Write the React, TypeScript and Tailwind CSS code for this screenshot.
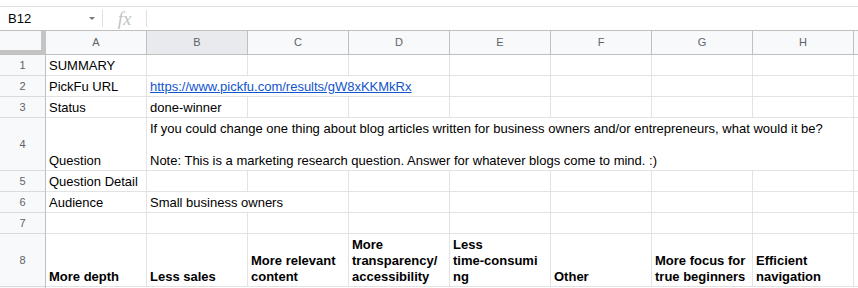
import React from "react";

const COLS = ["A", "B", "C", "D", "E", "F", "G", "H"];

const spanW: Record<number, string> = {
  1: "w-[101px]",
  2: "w-[202px]",
  3: "w-[303px]",
  7: "w-[707px]",
};

type Cell = { span?: number; lines?: string[]; link?: boolean; bold?: boolean };

type Row = { n: number; h: string; cells: Cell[] };

const rows: Row[] = [
  { n: 1, h: "h-[21px]", cells: [{ lines: ["SUMMARY"] }, {}, {}, {}, {}, {}, {}, {}] },
  {
    n: 2,
    h: "h-[21px]",
    cells: [
      { lines: ["PickFu URL"] },
      { span: 3, link: true, lines: ["https://www.pickfu.com/results/gW8xKKMkRx"] },
      {},
      {},
      {},
      {},
    ],
  },
  { n: 3, h: "h-[21px]", cells: [{ lines: ["Status"] }, { lines: ["done-winner"] }, {}, {}, {}, {}, {}, {}] },
  {
    n: 4,
    h: "h-[53px]",
    cells: [
      { lines: ["Question"] },
      {
        span: 7,
        lines: [
          "If you could change one thing about blog articles written for business owners and/or entrepreneurs, what would it be?",
          "\u00a0",
          "Note: This is a marketing research question. Answer for whatever blogs come to mind. :)",
        ],
      },
    ],
  },
  { n: 5, h: "h-[21px]", cells: [{ lines: ["Question Detail"] }, {}, {}, {}, {}, {}, {}, {}] },
  {
    n: 6,
    h: "h-[21px]",
    cells: [{ lines: ["Audience"] }, { span: 2, lines: ["Small business owners"] }, {}, {}, {}, {}, {}],
  },
  { n: 7, h: "h-[21px]", cells: [{}, {}, {}, {}, {}, {}, {}, {}] },
  {
    n: 8,
    h: "h-[53px]",
    cells: [
      { bold: true, lines: ["More depth"] },
      { bold: true, lines: ["Less sales"] },
      { bold: true, lines: ["More relevant", "content"] },
      { bold: true, lines: ["More", "transparency/", "accessibility"] },
      { bold: true, lines: ["Less", "time-consumi", "ng"] },
      { bold: true, lines: ["Other"] },
      { bold: true, lines: ["More focus for", "true beginners"] },
      { bold: true, lines: ["Efficient", "navigation"] },
    ],
  },
];

function GridCell({ cell }: { cell: Cell }) {
  const w = spanW[cell.span ?? 1];
  return (
    <div
      className={`${w} shrink-0 h-full border-r border-b border-[#e2e3e3] flex flex-col justify-end pl-[3px] pb-px overflow-hidden whitespace-nowrap text-[13px] leading-[16px] ${
        cell.bold ? "font-bold text-black" : "text-black"
      }`}
    >
      {cell.lines?.map((l, i) => (
        <div key={i} className={cell.link ? "text-[#1155cc] underline" : ""}>
          {l}
        </div>
      ))}
    </div>
  );
}

export default function App() {
  return (
    <div className="w-[858px] h-[288px] overflow-hidden bg-white font-['Liberation_Sans',Arial,sans-serif]">
      {/* formula bar */}
      <div className="mt-[6px] h-[24px] border-t border-[#e0e0e0] flex items-center">
        <div className="w-[102px] flex items-center justify-between pl-[8px] pr-[7px]">
          <span className="text-[13px] text-black">B12</span>
          <span className="w-0 h-0 border-l-[3px] border-r-[3px] border-t-[3px] border-l-transparent border-r-transparent border-t-[#777]" />
        </div>
        <div className="w-px h-[17px] bg-[#e0e0e0]" />
        <div className="w-[43px] flex justify-center">
          <span className="font-['Liberation_Serif',serif] italic text-[19px] leading-none text-[#c4c4c4]">fx</span>
        </div>
        <div className="w-px h-[17px] bg-[#e0e0e0]" />
      </div>

      {/* column headers */}
      <div className="h-[25px] border-t border-b border-[#c0c0c0] flex">
        <div className="w-[46px] shrink-0 h-full bg-[#f8f9fa] border-r-[5px] border-b-[4px] border-[#c4c4c4]" />
        {COLS.map((c) => (
          <div
            key={c}
            className={`w-[101px] shrink-0 h-full border-r border-[#c0c0c0] flex items-center justify-center text-[11px] text-[#5f6368] ${
              c === "B" ? "bg-[#e8eaed]" : "bg-[#f8f9fa]"
            }`}
          >
            {c}
          </div>
        ))}
        <div className="flex-1 h-full bg-[#f8f9fa]" />
      </div>

      {/* rows */}
      {rows.map((r) => (
        <div key={r.n} className={`${r.h} flex`}>
          <div className="w-[46px] shrink-0 h-full bg-[#f8f9fa] border-r border-r-[#c0c0c0] border-b border-b-[#dadada] flex items-center justify-center text-[11px] text-[#5f6368]">
            {r.n}
          </div>
          {r.cells.map((c, i) => (
            <GridCell key={i} cell={c} />
          ))}
          <div className="flex-1 h-full border-b border-[#e2e3e3]" />
        </div>
      ))}
      <div className="h-[21px] flex">
        <div className="w-[46px] shrink-0 h-full bg-[#f8f9fa] border-r border-[#c0c0c0]" />
      </div>
    </div>
  );
}
